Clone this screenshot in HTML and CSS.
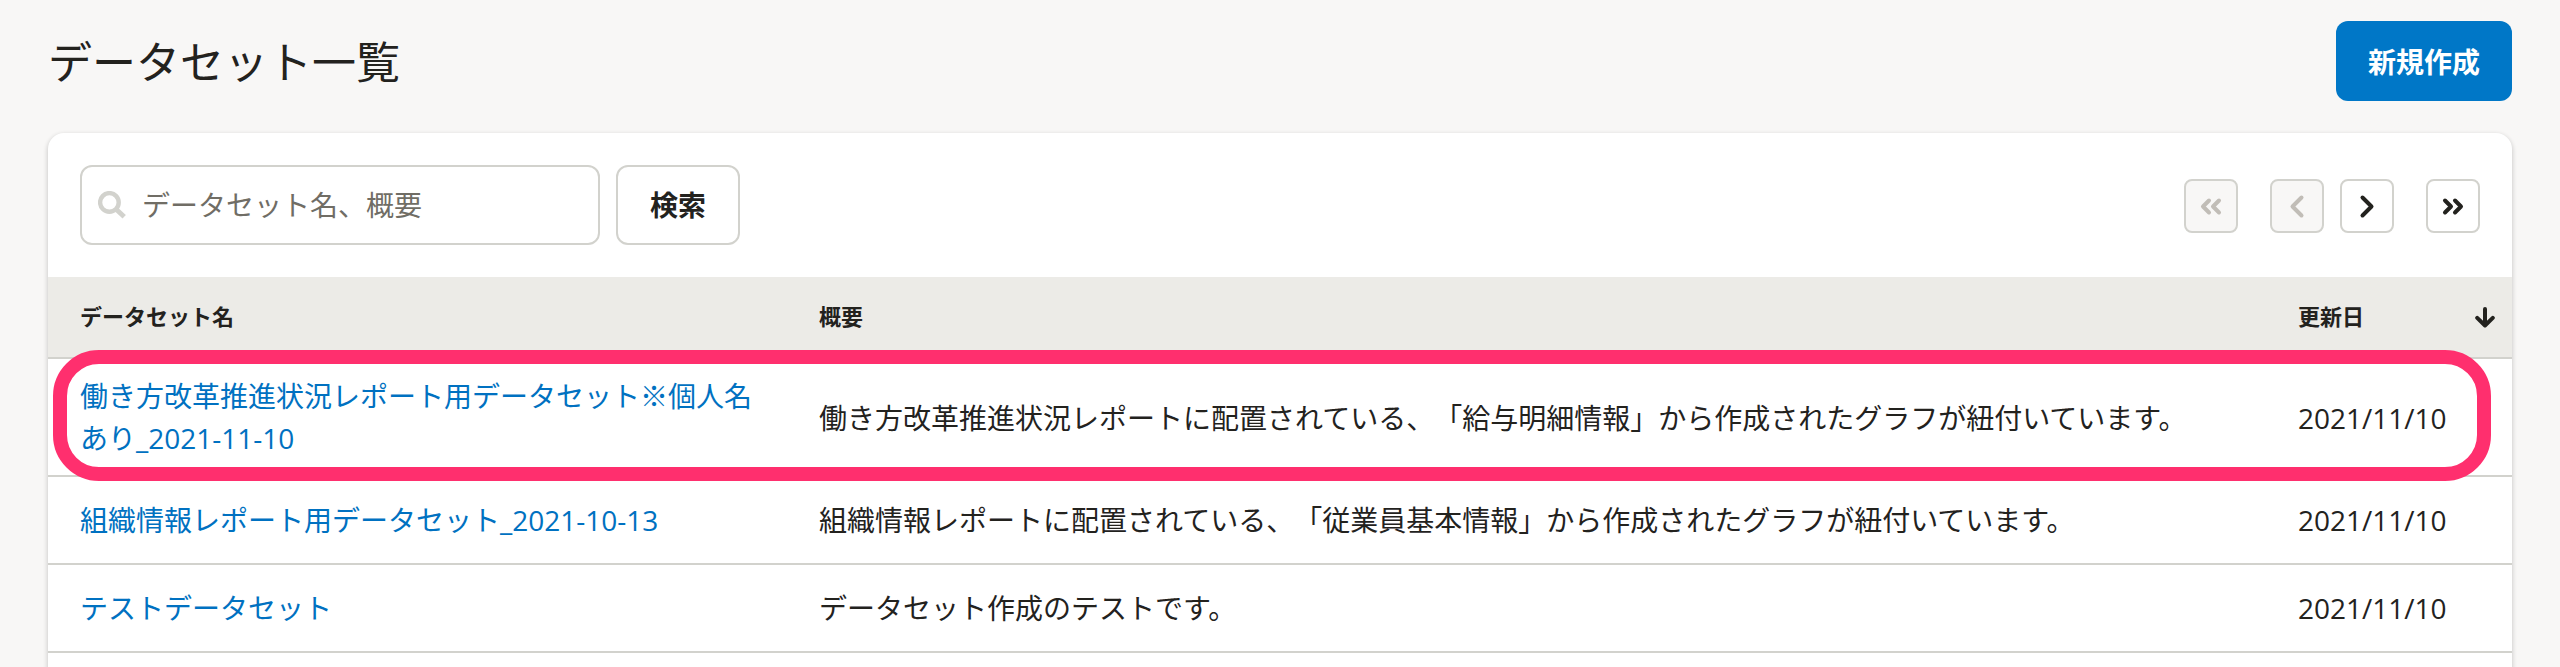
FILE: index.html
```html
<!DOCTYPE html>
<html lang="ja">
<head>
<meta charset="utf-8">
<title>データセット一覧</title>
<link rel="stylesheet" href="styles.css">
</head>
<body>
<header class="page-header">
  <h1 class="page-title">データセット一覧</h1>
  <button class="btn btn-primary">新規作成</button>
</header>
<main class="card">
  <div class="toolbar">
    <div class="search">
      <label class="search-field">
        <svg class="search-icon" width="28" height="28" viewBox="0 0 28 28" fill="none" stroke="currentColor"><circle cx="11.4" cy="11.4" r="9.3" stroke-width="4.4"/><path d="M18.4 18.4l7.8 7.4" stroke-width="4.8"/></svg>
        <span class="placeholder">データセット名、概要</span>
      </label>
      <button class="btn btn-secondary">検索</button>
    </div>
    <nav class="pager">
      <button class="page-btn disabled first"><svg width="50" height="50" viewBox="0 0 50 50"><path d="M23 19.500l-6 6 6 6M33 19.500l-6 6 6 6"/></svg></button>
      <button class="page-btn disabled"><svg width="50" height="50" viewBox="0 0 50 50"><path d="M29.500 16.500l-9 9 9 9"/></svg></button>
      <button class="page-btn"><svg width="50" height="50" viewBox="0 0 50 50"><path d="M20.500 16.500l9 9-9 9"/></svg></button>
      <button class="page-btn last"><svg width="50" height="50" viewBox="0 0 50 50"><path d="M17 19.500l6 6-6 6M27 19.500l6 6-6 6"/></svg></button>
    </nav>
  </div>
  <div class="table">
    <div class="row head">
      <div>データセット名</div>
      <div>概要</div>
      <div class="sort">更新日<svg width="20" height="22" viewBox="0 0 20 22"><path d="M10 2v16M2.200 10.800l7.800 7.700 7.800-7.700"/></svg></div>
    </div>
    <div class="row highlighted">
      <a class="link">働き方改革推進状況レポート用データセット※個人名あり_2021-11-10</a>
      <div>働き方改革推進状況レポートに配置されている、「給与明細情報」から作成されたグラフが紐付いています。</div>
      <div>2021/11/10</div>
    </div>
    <div class="row">
      <a class="link">組織情報レポート用データセット_2021-10-13</a>
      <div>組織情報レポートに配置されている、「従業員基本情報」から作成されたグラフが紐付いています。</div>
      <div>2021/11/10</div>
    </div>
    <div class="row">
      <a class="link">テストデータセット</a>
      <div>データセット作成のテストです。</div>
      <div>2021/11/10</div>
    </div>
  </div>
</main>
</body>
</html>
```
FILE: styles.css
```css
* { box-sizing: border-box; }
body {
  margin: 0;
  height: 667px;
  overflow: hidden;
  padding: 21px 48px 0;
  background: #f8f7f6;
  color: #23221e;
  font: 28px/42px "Open Sans", "Noto Sans CJK JP", sans-serif;
  text-spacing-trim: space-all;
}
button { font: inherit; color: inherit; }
.page-header {
  display: flex;
  justify-content: space-between;
  align-items: center;
  height: 80px;
  margin-bottom: 32px;
}
.page-title { margin: 0; padding-top: 2px; font-size: 44px; font-weight: 400; line-height: 66px; }
.btn {
  height: 80px;
  padding: 0 32px;
  border-radius: 12px;
  font-weight: 700;
}
.btn-primary { border: 0; padding-top: 2px; background: #0077c7; color: #fff; }
.btn-secondary { width: 124px; padding: 0; border: 2px solid #d2d2cd; background: #fff; }
.card {
  height: 560px;
  border-radius: 16px 16px 0 0;
  background: #fff;
  box-shadow: 0 2px 4px 1px rgba(3, 3, 2, 0.16);
}
.toolbar {
  display: flex;
  justify-content: space-between;
  align-items: center;
  height: 144px;
  padding: 2px 32px 0;
}
.search { display: flex; gap: 16px; margin-top: -2px; }
.search-field {
  display: flex;
  align-items: center;
  width: 520px;
  height: 80px;
  padding-left: 16px;
  border: 2px solid #d2d2cd;
  border-radius: 12px;
}
.search-icon { color: #d2d2cd; margin-right: 16px; }
.placeholder { color: #706d65; }
.pager { display: flex; gap: 16px; }
.page-btn {
  display: flex;
  width: 54px;
  height: 54px;
  padding: 0;
  border: 2px solid #d2d2cd;
  border-radius: 8px;
  background: #fff;
}
.page-btn.first { margin-right: 16px; }
.page-btn.last { margin-left: 16px; }
.page-btn.disabled { background: #f8f7f6; color: #c1bdb7; }
.page-btn svg, .sort svg {
  fill: none;
  stroke: currentColor;
  stroke-width: 4;
  stroke-linecap: round;
  stroke-linejoin: round;
}
.row {
  display: grid;
  grid-template-columns: 739px 1479px 1fr;
  align-items: center;
  min-height: 88px;
  border-bottom: 2px solid #d2d2cd;
}
.row > * { padding: 16px 32px; }
.row > :first-child { padding-right: 34px; }
.row:not(.head) > :last-child, .sort { white-space: nowrap; }
.head {
  height: 82px;
  min-height: 0;
  background: #ecebe7;
  font-size: 22px;
  font-weight: 700;
}
.head > * { padding-top: 15px; padding-bottom: 17px; }
.sort { display: flex; justify-content: space-between; align-items: center; }
.row > .sort { padding-right: 17px; }
.sort svg { margin-top: 3px; }
.link { color: #0071c1; }
.highlighted { position: relative; }
.highlighted > div { padding-top: 18px; }
.highlighted::after {
  content: "";
  position: absolute;
  left: 5px;
  right: 21px;
  top: -9px;
  bottom: -6px;
  border: 14px solid #ff2f6e;
  border-radius: 46px;
}
```
